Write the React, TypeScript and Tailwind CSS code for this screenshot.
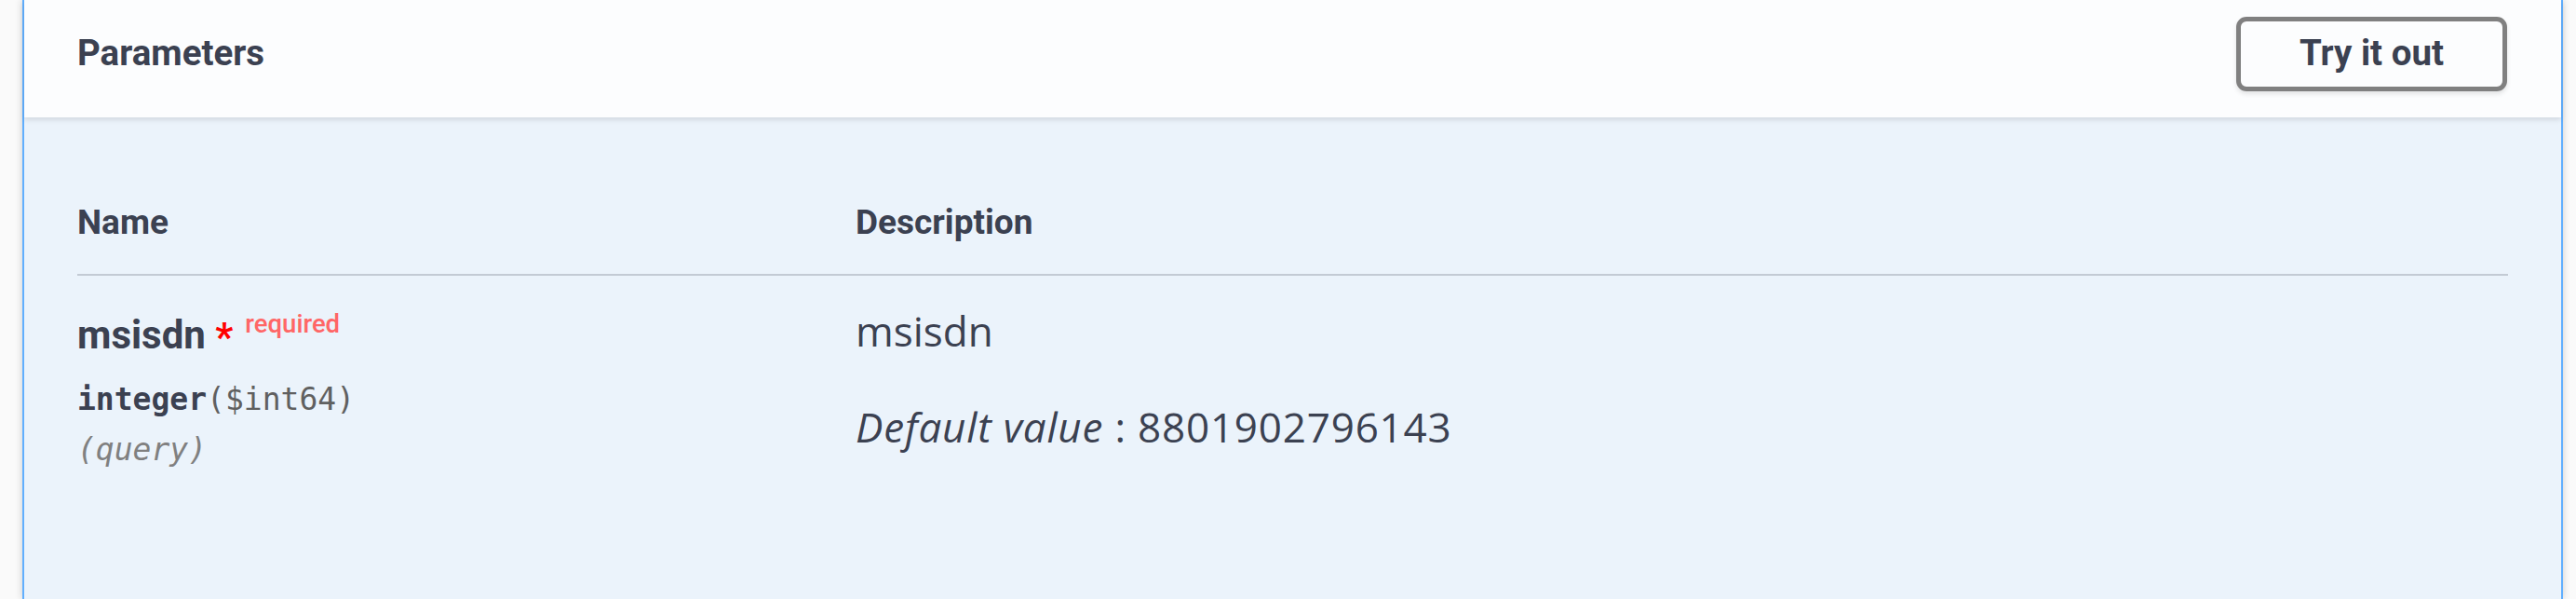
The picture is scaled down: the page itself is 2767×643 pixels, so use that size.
export default function App() {
  return (
    <div className="h-[643px] overflow-hidden bg-[#fafafa] pl-[24px] pr-[14px] text-[#3b4151]">
      <div className="h-full border-x-2 border-[#61affe] bg-[#ebf3fb] shadow-[0_0_8px_rgba(0,0,0,0.19)]">
        {/* tab header */}
        <div className="relative flex h-[126px] items-center justify-between bg-[#fcfdfe] pb-[11px] pl-[57px] pr-[58px] shadow-[0_3px_5px_rgba(0,0,0,0.1)]">
          <h4 className="font-['Roboto',sans-serif] text-[38.5px] font-bold leading-none">Parameters</h4>
          <button className="flex h-[80px] w-[291px] items-center justify-center rounded-[11px] border-[5px] border-[#808080] bg-transparent font-['Roboto',sans-serif] text-[38.5px] font-bold leading-none text-[#3b4151] shadow-[0_3px_5px_rgba(0,0,0,0.1)]">
            Try it out
          </button>
        </div>

        {/* parameters table */}
        <div className="px-[57px] pt-[94px]">
          <div className="grid grid-cols-[836px_1fr] border-b-2 border-[#c3cad4] pb-[37px] font-['Roboto',sans-serif] text-[37px] font-bold leading-none">
            <div>Name</div>
            <div>Description</div>
          </div>

          <div className="grid grid-cols-[836px_1fr]">
            <div className="pt-[43px]">
              <div className="font-['Roboto',sans-serif] text-[42px] font-bold leading-none">
                msisdn<span className="relative top-[2px] text-[#ff0000]">&nbsp;*</span>
                <span className="relative -top-[17px] pl-[13px] text-[27.5px] font-medium text-[#ff6666]">required</span>
              </div>
              <div className="mt-[31px] font-['DejaVu_Sans_Mono',monospace] text-[33px] font-semibold leading-none">
                integer<span className="font-normal text-[#606060]">($int64)</span>
              </div>
              <div className="mt-[21px] font-['DejaVu_Sans_Mono',monospace] text-[33px] italic leading-none text-[#808080]">
                (query)
              </div>
            </div>

            <div className="pt-[37px] font-['Open_Sans',sans-serif] text-[44px] leading-none">
              <p>msisdn</p>
              <p className="mt-[59px] tracking-[0.8px]">
                <i>Default value</i> : 8801902796143
              </p>
            </div>
          </div>
        </div>
      </div>
    </div>
  );
}
